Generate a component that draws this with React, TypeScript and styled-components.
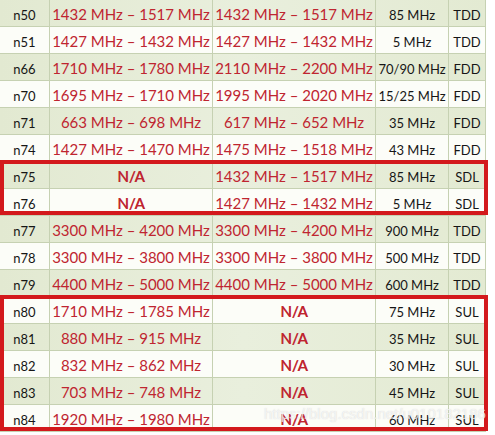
import React from "react";
import styled, { createGlobalStyle } from "styled-components";

const GlobalStyle = createGlobalStyle`
  html, body {
    margin: 0;
    padding: 0;
    background: #ffffff;
  }
`;

const Page = styled.div`
  position: relative;
  width: 495px;
  height: 435px;
  overflow: hidden;
  background: #ffffff;
  font-family: Lato, "Open Sans", sans-serif;
`;

const Table = styled.div`
  display: flex;
  flex-direction: column;
  width: 486px;
`;

const Section = styled.div<{ $boxed?: boolean }>`
  position: relative;
  display: flex;
  flex-direction: column;

  ${(p) =>
    p.$boxed &&
    `
    &::after {
      content: "";
      position: absolute;
      top: -2px;
      bottom: 1px;
      left: 0;
      right: -2px;
      border: 4px solid #d3191c;
      pointer-events: none;
      z-index: 2;
    }
  `}
`;

const Row = styled.div<{ $shade: boolean }>`
  display: grid;
  grid-template-columns: 50px 163px 163px 73px 37px;
  height: 27px;
  box-sizing: border-box;
  border-bottom: 1px solid #c6d1b2;
  background: ${(p) =>
    p.$shade
      ? "linear-gradient(90deg, #e2e9d1 0%, #e9efdd 50%, #e3ead2 100%)"
      : "#fcfdf8"};
`;

const Cell = styled.div<{ $kind: "band" | "range" | "na" | "small" }>`
  display: flex;
  align-items: center;
  justify-content: center;
  border-right: 1px solid #c6d1b2;
  box-sizing: border-box;
  white-space: nowrap;
  color: ${(p) => (p.$kind === "range" || p.$kind === "na" ? "#bf2530" : "#161616")};
  font-size: ${(p) => (p.$kind === "range" || p.$kind === "na" ? "15px" : "13px")};
  text-shadow: ${(p) => (p.$kind === "na" ? "0.5px 0 0 #bf2530" : "none")};
  padding-top: ${(p) => (p.$kind === "range" || p.$kind === "na" ? "2px" : "4px")};
`;

const Watermark = styled.div`
  position: absolute;
  left: 264px;
  top: 405px;
  font-family: "Liberation Sans", Arial, sans-serif;
  font-size: 15px;
  color: rgba(255, 255, 255, 0.7);
  text-shadow: 0 0 1px rgba(170, 170, 170, 0.5);
  white-space: nowrap;
  z-index: 3;
`;

type Band = [string, string, string, string, string];

const bands: Band[] = [
  ["n50", "1432 MHz – 1517 MHz", "1432 MHz – 1517 MHz", "85 MHz", "TDD"],
  ["n51", "1427 MHz – 1432 MHz", "1427 MHz – 1432 MHz", "5 MHz", "TDD"],
  ["n66", "1710 MHz – 1780 MHz", "2110 MHz – 2200 MHz", "70/90 MHz", "FDD"],
  ["n70", "1695 MHz – 1710 MHz", "1995 MHz – 2020 MHz", "15/25 MHz", "FDD"],
  ["n71", "663 MHz – 698 MHz", "617 MHz – 652 MHz", "35 MHz", "FDD"],
  ["n74", "1427 MHz – 1470 MHz", "1475 MHz – 1518 MHz", "43 MHz", "FDD"],
  ["n75", "N/A", "1432 MHz – 1517 MHz", "85 MHz", "SDL"],
  ["n76", "N/A", "1427 MHz – 1432 MHz", "5 MHz", "SDL"],
  ["n77", "3300 MHz – 4200 MHz", "3300 MHz – 4200 MHz", "900 MHz", "TDD"],
  ["n78", "3300 MHz – 3800 MHz", "3300 MHz – 3800 MHz", "500 MHz", "TDD"],
  ["n79", "4400 MHz – 5000 MHz", "4400 MHz – 5000 MHz", "600 MHz", "TDD"],
  ["n80", "1710 MHz – 1785 MHz", "N/A", "75 MHz", "SUL"],
  ["n81", "880 MHz – 915 MHz", "N/A", "35 MHz", "SUL"],
  ["n82", "832 MHz – 862 MHz", "N/A", "30 MHz", "SUL"],
  ["n83", "703 MHz – 748 MHz", "N/A", "45 MHz", "SUL"],
  ["n84", "1920 MHz – 1980 MHz", "N/A", "60 MHz", "SUL"],
];

// which slices of the table get the red frame
const sections: { from: number; to: number; boxed: boolean }[] = [
  { from: 0, to: 6, boxed: false },
  { from: 6, to: 8, boxed: true },
  { from: 8, to: 11, boxed: false },
  { from: 11, to: 16, boxed: true },
];

function BandRow({ band, index }: { band: Band; index: number }) {
  const [name, up, down, width, mode] = band;
  const range = (v: string) => (v === "N/A" ? "na" : "range");
  return (
    <Row $shade={index % 2 === 0}>
      <Cell $kind="band">{name}</Cell>
      <Cell $kind={range(up)}>{up}</Cell>
      <Cell $kind={range(down)}>{down}</Cell>
      <Cell $kind="small">{width}</Cell>
      <Cell $kind="small">{mode}</Cell>
    </Row>
  );
}

export default function App() {
  return (
    <Page>
      <GlobalStyle />
      <Table>
        {sections.map((s) => (
          <Section key={s.from} $boxed={s.boxed}>
            {bands.slice(s.from, s.to).map((b, i) => (
              <BandRow key={b[0]} band={b} index={s.from + i} />
            ))}
          </Section>
        ))}
      </Table>
      <Watermark>https://blog.csdn.net/u010182186</Watermark>
    </Page>
  );
}
